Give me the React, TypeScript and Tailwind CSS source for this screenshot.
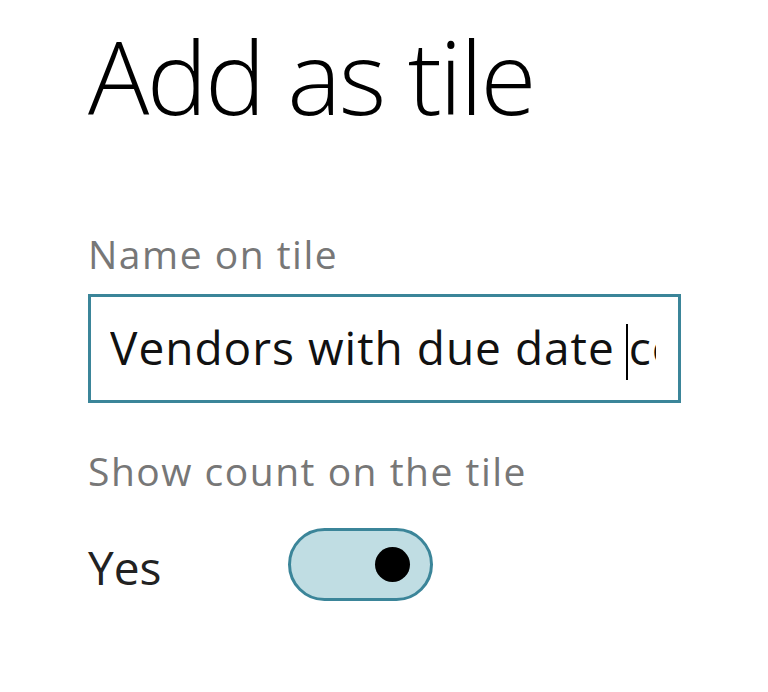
import React, { useState } from 'react';

const font = { fontFamily: '"Open Sans", "Noto Sans", sans-serif' };

const App = () => {
  const [name] = useState('Vendors with due date count');
  const [showCount, setShowCount] = useState(true);
  const beforeCursor = 'Vendors with due date ';

  return (
    <div className="w-[768px] h-[692px] bg-white overflow-hidden" style={font}>
      <div className="pl-[88px] pt-[16px]">
        <h1 className="text-[102px] font-light leading-[120px] text-black tracking-[-2.5px]">Add as tile</h1>

        <div className="mt-[98px] flex flex-col">
          <label className="text-[39px] leading-[40px] tracking-[1.5px] text-[#777]">Name on tile</label>
          <div className="mt-[20px] w-[593px] h-[109px] border-[3px] border-[#3b8599] flex items-center pl-[19px] pr-[22px] overflow-hidden">
            <div className="whitespace-nowrap overflow-hidden w-full text-[46px] leading-[60px] tracking-[1px] text-[#111]">
              <span>{beforeCursor}</span>
              <span className="inline-block w-[2px] h-[56px] bg-black align-middle -ml-[2px] mr-[1px]" />
              <span>{name.slice(beforeCursor.length)}</span>
            </div>
          </div>

          <label className="mt-[48px] text-[39px] leading-[40px] tracking-[1.5px] text-[#777]">Show count on the tile</label>
          <div className="mt-[37px] flex items-center">
            <span className="w-[200px] pt-[4px] text-[46px] leading-[60px] text-[#222]">{showCount ? 'Yes' : 'No'}</span>
            <button
              onClick={() => setShowCount(!showCount)}
              className="w-[145px] h-[73px] rounded-full border-[3px] border-[#3b8599] bg-[#c0dde3] flex items-center justify-end pr-[20px]"
            >
              <span className="w-[35px] h-[35px] rounded-full bg-black" />
            </button>
          </div>
        </div>
      </div>
    </div>
  );
};

export default App;
